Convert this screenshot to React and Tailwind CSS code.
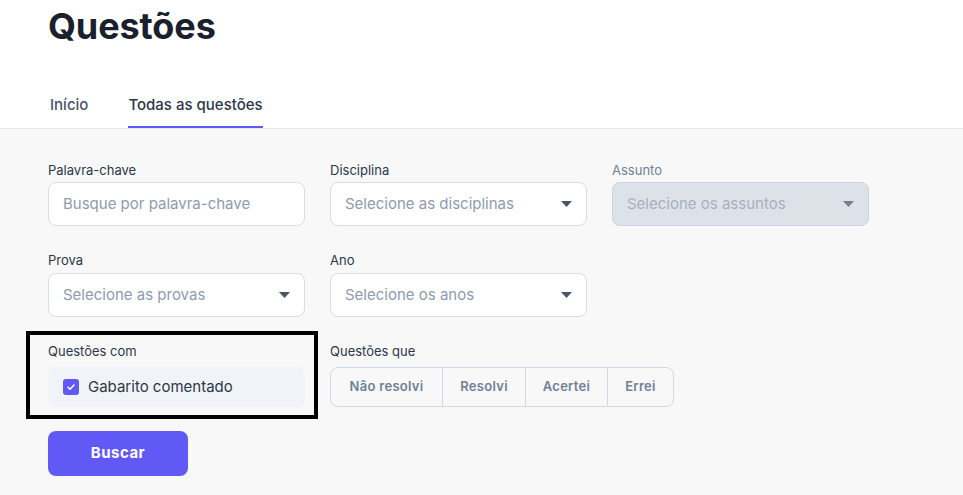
import React from 'react';

const Caret = ({ muted }) => (
    <svg width="11" height="6" viewBox="0 0 11 6" className={muted ? 'text-[#718096]' : 'text-[#4a5568]'}>
        <path d="M0 0h11L5.5 6z" fill="currentColor" />
    </svg>
);

const Label = ({ children, muted, className = '' }) => (
    <div className={`text-[13px] leading-4 ${muted ? 'text-[#718096]' : 'text-[#2d3748]'} ${className}`}>{children}</div>
);

const Select = ({ placeholder, disabled }) => (
    <div
        className={`h-[44px] flex items-center justify-between pl-[14px] pr-[14px] rounded-lg border ${
            disabled ? 'bg-[#dde2e9] border-[#c9d2de]' : 'bg-white border-[#d6dee9]'
        }`}
    >
        <span className={`text-[15px] ${disabled ? 'text-[#a6b1c0]' : 'text-[#8f9bad]'}`}>{placeholder}</span>
        <Caret muted={disabled} />
    </div>
);

const App = () => {
    const segments = [
        ['Não resolvi', 'w-[111px]'],
        ['Resolvi', 'w-[83px]'],
        ['Acertei', 'w-[82px]'],
        ['Errei', 'w-[66px]'],
    ];

    return (
        <div className="min-h-[495px] bg-[#f8f8f9] font-['Inter',sans-serif]">
            {/* header */}
            <div className="bg-white border-b border-[#e6e8ee] px-12">
                <h1 className="pt-[6px] text-[36px] leading-[40px] font-bold text-[#1a202c] tracking-[-0.1px]">Questões</h1>
                <div className="mt-[49px] flex items-end gap-10 text-[15px] leading-5 font-medium">
                    <div className="ml-[2px] pb-[11px] border-b-2 border-transparent text-[#4a5568]">Início</div>
                    <div className="pb-[11px] border-b-2 border-[#6159f5] text-[#2d3748]">Todas as questões</div>
                </div>
            </div>

            {/* filters */}
            <div className="px-12 pt-[33px]">
                <div className="grid grid-cols-[257px_257px_257px] gap-x-[25px] gap-y-[26px]">
                    <div>
                        <Label className="mb-1">Palavra-chave</Label>
                        <div className="h-[44px] flex items-center pl-[14px] rounded-lg border border-[#d6dee9] bg-white">
                            <span className="text-[15px] text-[#8f9bad]">Busque por palavra-chave</span>
                        </div>
                    </div>
                    <div>
                        <Label className="mb-1">Disciplina</Label>
                        <Select placeholder="Selecione as disciplinas" />
                    </div>
                    <div>
                        <Label className="mb-1" muted>Assunto</Label>
                        <Select placeholder="Selecione os assuntos" disabled />
                    </div>

                    <div>
                        <Label className="mb-[5px]">Prova</Label>
                        <Select placeholder="Selecione as provas" />
                    </div>
                    <div>
                        <Label className="mb-[5px]">Ano</Label>
                        <Select placeholder="Selecione os anos" />
                    </div>
                    <div />

                    <div className="relative">
                        <Label className="mb-2">Questões com</Label>
                        <div className="h-10 flex items-center gap-[9px] pl-[15px] rounded-lg bg-[#f0f4f8]">
                            <span className="w-4 h-4 rounded-[3px] bg-[#6159f5] flex items-center justify-center">
                                <svg width="10" height="10" viewBox="0 0 10 10">
                                    <path d="M2 5.2l2 2L8 3" stroke="white" strokeWidth="1.6" fill="none" strokeLinecap="round" strokeLinejoin="round" />
                                </svg>
                            </span>
                            <span className="text-[15px] text-[#2d3748]">Gabarito comentado</span>
                        </div>
                        {/* highlight frame */}
                        <div className="absolute -left-[22px] -right-[13px] -top-[12px] -bottom-[12px] border-4 border-black pointer-events-none" />
                    </div>
                    <div className="col-span-2">
                        <Label className="mb-2">Questões que</Label>
                        <div className="inline-flex h-10 rounded-lg border border-[#d0d9e4] overflow-hidden">
                            {segments.map(([text, w], i) => (
                                <div
                                    key={text}
                                    className={`${w} flex items-center justify-center text-[13px] font-semibold tracking-[0.3px] text-[#718096] ${
                                        i > 0 ? 'border-l border-[#d0d9e4]' : ''
                                    }`}
                                >
                                    {text}
                                </div>
                            ))}
                        </div>
                    </div>
                </div>

                <button className="mt-6 w-[140px] h-[45px] rounded-lg bg-[#6159f5] text-white text-[15px] font-bold tracking-[0.5px]">
                    Buscar
                </button>
            </div>
        </div>
    );
};

export default App;
